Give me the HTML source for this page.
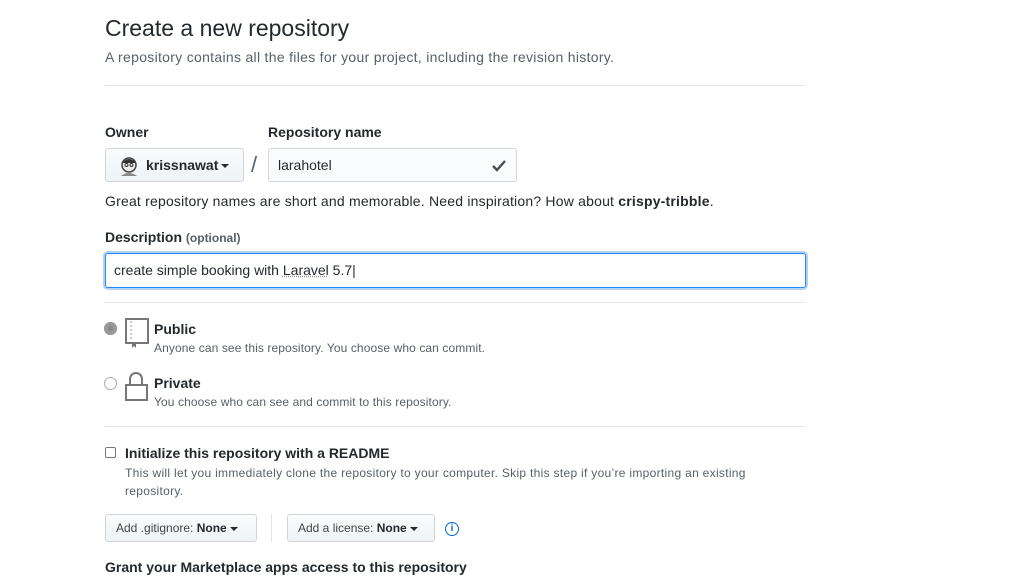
<!DOCTYPE html><html><head><style>
body{margin:0;width:1014px;height:570px;overflow:hidden;background:#fff;font-family:"Liberation Sans",sans-serif;color:#24292e;position:relative}
.a{position:absolute;white-space:nowrap}
.hr{position:absolute;left:105px;width:700px;height:1px;background:#e1e4e8}
.b{font-weight:bold;font-size:14px}
.btn{position:absolute;border:1px solid #d1d5da;border-radius:3px;background:linear-gradient(#fafbfc,#eff3f6);box-sizing:border-box;font-size:12px;color:#444}
.caret{display:inline-block;border-left:4px solid transparent;border-right:4px solid transparent;border-top:4px solid #24292e;vertical-align:middle;margin-left:3px}
.s{font-size:12px;color:#586069}
</style></head><body>
<div class="a" style="left:105px;top:15px;font-size:23px;font-weight:300">Create a new repository</div>
<div class="a" style="left:105px;top:49px;font-size:14px;letter-spacing:0.3px;color:#586069">A repository contains all the files for your project, including the revision history.</div>
<div class="hr" style="top:85px"></div>
<div class="a b" style="left:105px;top:124px">Owner</div>
<div class="a b" style="left:268px;top:124px">Repository name</div>
<div class="btn" style="left:105px;top:148px;width:139px;height:34px">
<svg class="a" style="left:12px;top:6px" width="22" height="22" viewBox="0 0 22 22"><circle cx="11" cy="10" r="7" fill="#eee" stroke="#444" stroke-width="1.5"/><path d="M4 8q7-8 14 0" fill="#333"/><circle cx="8.5" cy="10" r="1.5" fill="none" stroke="#333"/><circle cx="13.5" cy="10" r="1.5" fill="none" stroke="#333"/><path d="M3 21q8-6 16 0" fill="#888"/></svg>
<div class="a b" style="left:40px;top:8px;color:#24292e">krissnawat<span class="caret"></span></div></div>
<div class="a" style="left:251px;top:152px;font-size:22px;color:#586069">/</div>
<div class="a" style="left:268px;top:148px;width:249px;height:34px;border:1px solid #d1d5da;border-radius:3px;box-sizing:border-box;background:#fafbfc"><div class="a" style="left:9px;top:8px;font-size:14px">larahotel</div>
<svg class="a" style="left:222px;top:10px" width="16" height="14" viewBox="0 0 16 14"><path d="M2 7l4 4 8-9" stroke="#444d56" stroke-width="2.4" fill="none"/></svg></div>
<div class="a" style="left:105px;top:193px;font-size:14px;letter-spacing:0.2px">Great repository names are short and memorable. Need inspiration? How about <b>crispy-tribble</b>.</div>
<div class="a b" style="left:105px;top:229px">Description <span style="font-size:12px;color:#586069">(optional)</span></div>
<div class="a" style="left:105px;top:253px;width:701px;height:35px;border:1px solid #2188ff;border-radius:3px;box-sizing:border-box;box-shadow:0 0 0 2px rgba(3,102,214,.3)"><div class="a" style="left:8px;top:8px;font-size:14px">create simple booking with <span style="text-decoration:underline dotted #999">Laravel</span> 5.7|</div></div>
<div class="hr" style="top:302px"></div>
<div class="a" style="left:104px;top:322px;width:13px;height:13px;border-radius:50%;background:#888;box-shadow:inset 0 0 0 4px #999"></div>
<svg class="a" style="left:124px;top:317px" width="26" height="32" viewBox="0 0 26 32"><rect x="2" y="2" width="22" height="24" fill="none" stroke="#777" stroke-width="2"/><path d="M7 4v20" stroke="#999" stroke-dasharray="2 2"/><path d="M8 26v5l2-2 2 2v-5" fill="#777"/></svg>
<div class="a b" style="left:154px;top:321px">Public</div>
<div class="a s" style="left:154px;top:341px;letter-spacing:0.1px">Anyone can see this repository. You choose who can commit.</div>
<div class="a" style="left:104px;top:377px;width:13px;height:13px;border-radius:50%;border:1px solid #aaa;box-sizing:border-box"></div>
<div class="a" style="left:129px;top:372px;width:14px;height:14px;border:2px solid #777;border-bottom:none;border-radius:7px 7px 0 0;box-sizing:border-box"></div>
<div class="a" style="left:125px;top:384px;width:23px;height:17px;border:2px solid #777;box-sizing:border-box"></div>
<div class="a b" style="left:154px;top:375px">Private</div>
<div class="a s" style="left:154px;top:395px;letter-spacing:0.1px">You choose who can see and commit to this repository.</div>
<div class="hr" style="top:426px"></div>
<div class="a" style="left:105px;top:447px;width:11px;height:11px;border:1px solid #777;border-radius:2px;box-sizing:border-box"></div>
<div class="a b" style="left:125px;top:445px">Initialize this repository with a README</div>
<div class="a s" style="left:125px;top:464px;line-height:18px;white-space:normal;width:650px;letter-spacing:0.3px">This will let you immediately clone the repository to your computer. Skip this step if you’re importing an existing repository.</div>
<div class="btn" style="left:105px;top:514px;width:152px;height:28px"><div class="a" style="left:10px;top:6px">Add .gitignore: <b style="color:#24292e">None</b><span class="caret"></span></div></div>
<div class="a" style="left:271px;top:514px;width:1px;height:28px;background:#e1e4e8"></div>
<div class="btn" style="left:287px;top:514px;width:148px;height:28px"><div class="a" style="left:10px;top:6px">Add a license: <b style="color:#24292e">None</b><span class="caret"></span></div></div>
<div class="a" style="left:445px;top:522px;width:14px;height:14px;border:1.5px solid #0366d6;border-radius:50%;box-sizing:border-box;font-size:10px;font-weight:bold;color:#0366d6;text-align:center;line-height:11px">i</div>
<div class="a b" style="left:105px;top:559px">Grant your Marketplace apps access to this repository</div>
</body></html>
